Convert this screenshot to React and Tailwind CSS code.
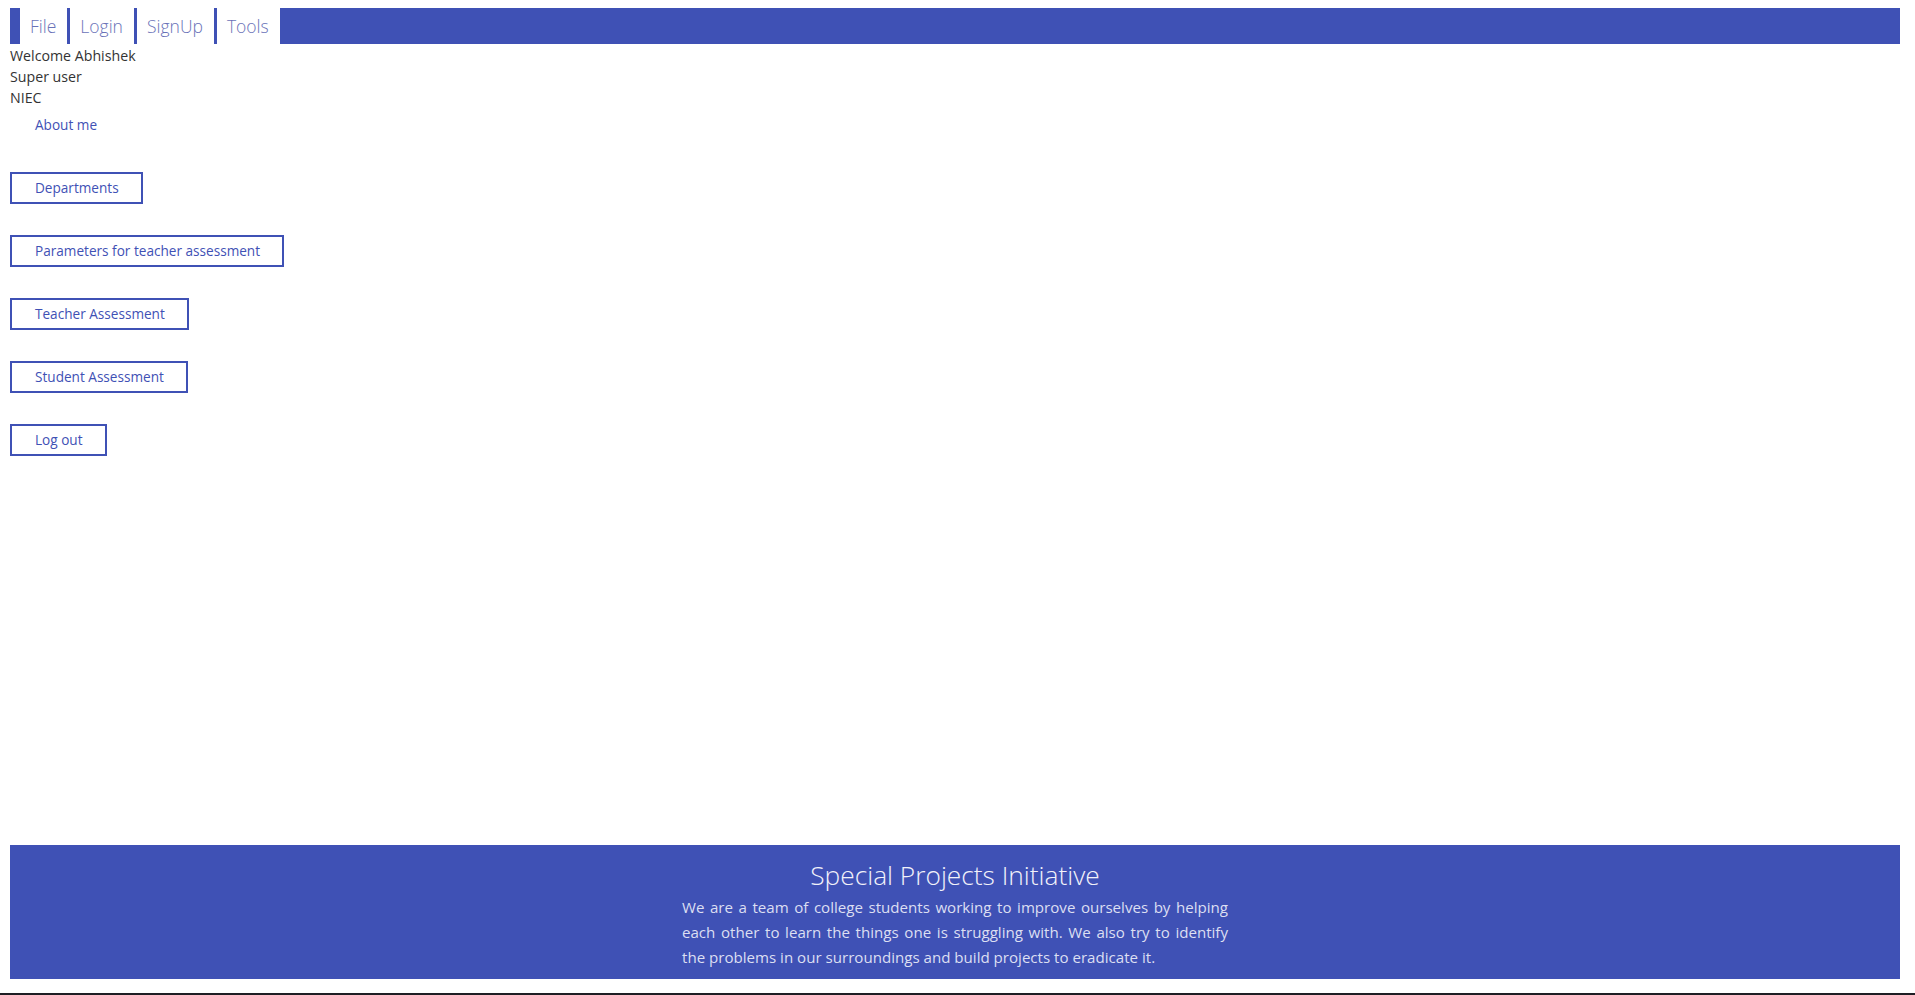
import React from 'react';

const navItems = ['File', 'Login', 'SignUp', 'Tools'];
const menuItems = ['Departments', 'Parameters for teacher assessment', 'Teacher Assessment', 'Student Assessment', 'Log out'];

const App = () => {
    return (
        <div className="h-screen flex flex-col bg-white" style={{ fontFamily: '"Open Sans", "Noto Sans", sans-serif' }}>
            <div className="flex-1 flex flex-col pl-[10px] pr-[15px]">
                {/* top nav */}
                <ul className="mt-[8px] h-[36px] bg-[#3f51b5] flex pl-[10px] gap-[3px]">
                    {navItems.map(n => (
                        <li key={n} className="bg-white h-full flex items-center pl-[10px] pr-[11px] text-[17.5px] font-light text-[#6a72b8]">{n}</li>
                    ))}
                </ul>

                {/* user info */}
                <div className="mt-[1px] text-[14.2px] leading-[21px] text-[#333]">
                    <p>Welcome Abhishek</p>
                    <p>Super user</p>
                    <p>NIEC</p>
                </div>

                <div className="mt-[1px] flex flex-col items-start gap-[31px]">
                    <a className="h-[32px] flex items-center px-[25px] text-[13.6px] text-[#3f51b5]">About me</a>
                    {menuItems.map(m => (
                        <button key={m} className="h-[32px] flex items-center pl-[23px] pr-[22px] border-2 border-[#3f51b5] text-[13.6px] text-[#3f51b5] bg-white">{m}</button>
                    ))}
                </div>

                {/* footer */}
                <footer className="mt-auto mb-[14px] h-[134px] bg-[#3f51b5] flex flex-col items-center pt-[12px]">
                    <h2 className="text-[26.3px] leading-[36px] font-light text-[#f2f2fa]">Special Projects Initiative</h2>
                    <div className="mt-[2px] w-[546px] text-[15.1px] leading-[25px] text-[#dcdff2]">
                        <p className="text-justify [text-align-last:justify]">We are a team of college students working to improve ourselves by helping</p>
                        <p className="text-justify [text-align-last:justify]">each other to learn the things one is struggling with. We also try to identify</p>
                        <p>the problems in our surroundings and build projects to eradicate it.</p>
                    </div>
                </footer>
            </div>
            <div className="h-[2px] bg-[#1e1e24]" />
        </div>
    );
};

export default App;
